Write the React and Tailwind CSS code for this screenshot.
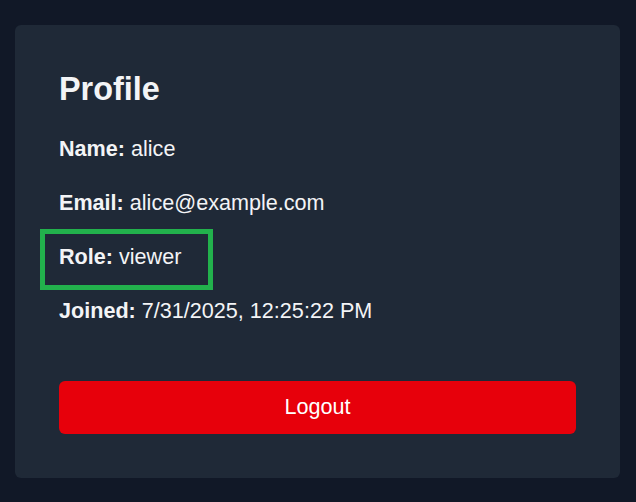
import React from "react";

const Row = ({ label, value }) => (
  <p className="h-[32px] leading-[32px] text-[21.6px] text-[#f3f4f6]">
    <span className="font-bold">{label}</span> {value}
  </p>
);

export default function App() {
  return (
    <div className="min-h-screen bg-[#111827] pt-[25px] pl-[15px] font-['Liberation_Sans',Arial,sans-serif]">
      <div className="w-[605px] h-[453px] bg-[#1f2937] rounded-md px-[44px] pt-[46px]">
        <h1 className="h-[36px] leading-[36px] text-[32.4px] font-bold text-[#f3f4f6]">
          Profile
        </h1>
        <div className="mt-[26px] flex flex-col gap-[22px]">
          <Row label="Name:" value="alice" />
          <Row label="Email:" value="alice@example.com" />
          <div className="relative">
            <Row label="Role:" value="viewer" />
            <div className="absolute left-[-19px] top-[-12px] w-[173px] h-[61px] border-[5px] border-[#22b14c]" />
          </div>
          <Row label="Joined:" value="7/31/2025, 12:25:22 PM" />
        </div>
        <button className="mt-[54px] w-full h-[53px] rounded-md bg-[#e7000b] text-white text-[21.6px]">
          Logout
        </button>
      </div>
    </div>
  );
}
